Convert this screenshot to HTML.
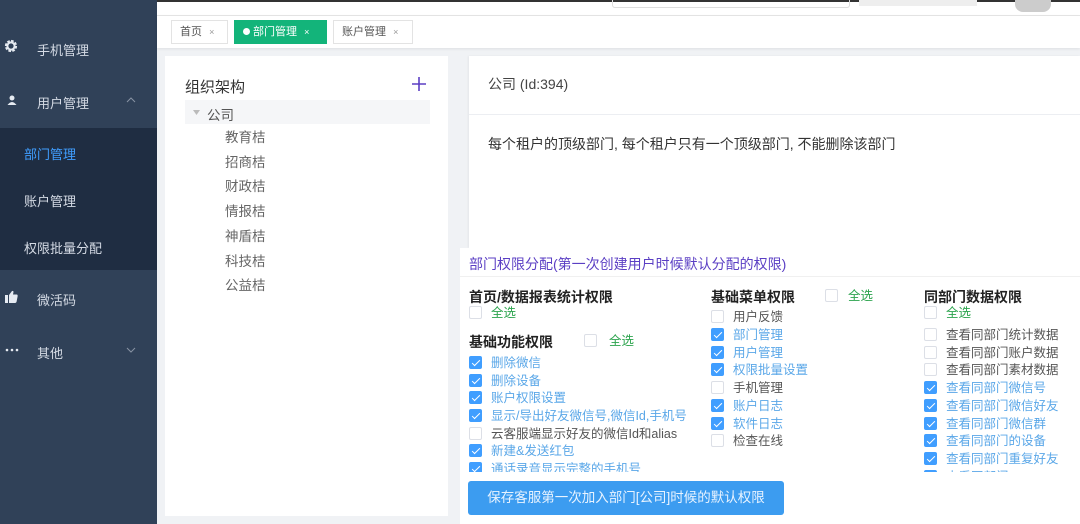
<!DOCTYPE html><html><head><meta charset="utf-8"><style>
*{margin:0;padding:0;box-sizing:border-box}
body{width:1080px;height:524px;overflow:hidden;position:relative;background:#f0f2f5;font-family:"Liberation Sans","Noto Sans CJK SC",sans-serif;font-size:13px;color:#333}
.abs{position:absolute}
#side{left:0;top:0;width:157px;height:524px;background:#304158}
.mi{position:absolute;left:0;width:157px;color:#d5dbe5;font-size:13px}
.sub{position:absolute;left:0;top:128px;width:157px;height:142px;background:#1f2d42}
.topbar{left:157px;top:0;width:923px;height:16px;background:#fff;border-top:2px solid #333;border-bottom:1px solid #e6e6e6}
.tabs{left:157px;top:16px;width:923px;height:32px;background:#fff;box-shadow:0 1px 3px rgba(0,0,0,.08)}
.tab{position:absolute;top:4px;height:24px;border:1px solid #e3e3e3;font-size:11px;line-height:22px;padding-left:8px;color:#555;background:#fff}
.card{background:#fff;position:absolute}
.cb{display:inline-block;width:13px;height:13px;border:1px solid #dcdfe6;border-radius:2px;vertical-align:-2px;margin-right:9px;background:#fff;position:relative}
.cb.on{background:#409eff;border-color:#409eff}
.cb.on:after{content:"";position:absolute;left:4px;top:1px;width:3px;height:7px;border:solid #fff;border-width:0 1.5px 1.5px 0;transform:rotate(45deg)}
.row{position:absolute;font-size:12.5px;color:#555;white-space:nowrap;line-height:16px}
.row.b{color:#5aa7e8}
.h{position:absolute;font-size:14px;font-weight:bold;color:#222;white-space:nowrap}
.g{color:#2da44e}
svg{position:absolute}
</style></head><body>
<div id="side" class="abs">
<div class="sub"></div>
<svg style="left:4px;top:39px" width="14" height="14" viewBox="0 0 14 14"><circle cx="7" cy="7" r="4.6" fill="none" stroke="#e6ebf2" stroke-width="3" stroke-dasharray="2.4 1.2"/><circle cx="7" cy="7" r="3.6" fill="none" stroke="#e6ebf2" stroke-width="2"/></svg>
<div class="mi" style="top:40px"><span style="position:absolute;left:37px">手机管理</span></div>
<svg style="left:7px;top:95px" width="10" height="10" viewBox="0 0 10 10"><circle cx="5" cy="3" r="2.5" fill="#e6ebf2"/><path d="M0.5 10 Q5 4 9.5 10Z" fill="#e6ebf2"/></svg>
<div class="mi" style="top:93px"><span style="position:absolute;left:37px">用户管理</span></div>
<svg style="left:126px;top:97px" width="10" height="6" viewBox="0 0 10 6"><path d="M1 5 L5 1 L9 5" fill="none" stroke="#8893a3" stroke-width="1"/></svg>
<div class="mi" style="top:144px;color:#409eff"><span style="position:absolute;left:24px">部门管理</span></div>
<div class="mi" style="top:191px"><span style="position:absolute;left:24px">账户管理</span></div>
<div class="mi" style="top:238px"><span style="position:absolute;left:24px">权限批量分配</span></div>
<svg style="left:5px;top:290px" width="13" height="13" viewBox="0 0 13 13"><rect x="0" y="5" width="3" height="8" fill="#e6ebf2"/><path d="M4 5 L7 1 Q8.5 0.5 8.5 2 L8 4.5 L12 4.5 Q13 5 12.5 7 L11.5 12 Q11 13 10 13 L4 13Z" fill="#e6ebf2"/></svg>
<div class="mi" style="top:290px"><span style="position:absolute;left:37px">微活码</span></div>
<svg style="left:5px;top:348px" width="14" height="4" viewBox="0 0 14 4"><circle cx="2" cy="2" r="1.3" fill="#e6ebf2"/><circle cx="7" cy="2" r="1.3" fill="#e6ebf2"/><circle cx="12" cy="2" r="1.3" fill="#e6ebf2"/></svg>
<div class="mi" style="top:343px"><span style="position:absolute;left:37px">其他</span></div>
<svg style="left:126px;top:347px" width="10" height="6" viewBox="0 0 10 6"><path d="M1 1 L5 5 L9 1" fill="none" stroke="#8893a3" stroke-width="1"/></svg>
</div>
<div class="topbar abs"><div class="abs" style="left:455px;top:-2px;width:238px;height:8px;border:1px solid #ddd;border-top:0;border-radius:0 0 3px 3px"></div><div class="abs" style="left:702px;top:-2px;width:118px;height:6px;background:#eee"></div><div class="abs" style="left:858px;top:-2px;width:36px;height:12px;background:#ccc;border-radius:0 0 8px 8px"></div></div>
<div class="tabs abs">
<div class="tab" style="left:14px;width:57px">首页 <span style="font-size:9px;color:#999;margin-left:4px">×</span></div>
<div class="tab" style="left:77px;width:93px;background:#13b47a;border-color:#13b47a;color:#fff"><span style="display:inline-block;width:7px;height:7px;border-radius:50%;background:#fff;margin-right:3px;vertical-align:0"></span>部门管理 <span style="font-size:9px;margin-left:4px">×</span></div>
<div class="tab" style="left:176px;width:80px">账户管理 <span style="font-size:9px;color:#999;margin-left:4px">×</span></div>
</div>
<div class="card" style="left:165px;top:56px;width:283px;height:460px">
<div class="abs" style="left:20px;top:20px;font-size:15px;color:#333">组织架构</div>
<svg style="left:246px;top:20px" width="16" height="16" viewBox="0 0 16 16"><path d="M8 1V15M1 8H15" stroke="#5b3fc4" stroke-width="1.6"/></svg>
<div class="abs" style="left:20px;top:44px;width:245px;height:24px;background:#f5f6f8"></div>
<svg style="left:28px;top:54px" width="7" height="5" viewBox="0 0 7 5"><path d="M0 0H7L3.5 5Z" fill="#bbb"/></svg>
<div class="abs" style="left:42px;top:48px;font-size:13.5px;color:#555">公司</div>
<div class="abs" style="left:60px;top:70px;font-size:13.5px;color:#666;line-height:24.7px">教育桔<br>招商桔<br>财政桔<br>情报桔<br>神盾桔<br>科技桔<br>公益桔</div>
</div>
<div class="card" style="left:469px;top:56px;width:611px;height:192px;box-shadow:-1px 0 2px rgba(0,0,0,.05)">
<div class="abs" style="left:19px;top:18px;font-size:14px;color:#444">公司 (Id:394)</div>
<div class="abs" style="left:0;top:58px;width:611px;height:1px;background:#eceef2"></div>
<div class="abs" style="left:19px;top:78px;font-size:14px;color:#333">每个租户的顶级部门, 每个租户只有一个顶级部门, 不能删除该部门</div>
</div>
<div class="abs" style="left:460px;top:248px;width:620px;height:276px;background:#fff"></div>
<div class="abs" style="left:469px;top:254px;font-size:14px;color:#5b3fc4">部门权限分配(第一次创建用户时候默认分配的权限)</div>
<div class="abs" style="left:460px;top:276px;width:620px;height:1px;background:#f0f0f0"></div>
<div style="position:absolute;left:0;top:0;width:1080px;height:472px;overflow:hidden">
<div class="h" style="left:469px;top:287px">首页/数据报表统计权限</div>
<div class="row" style="left:469px;top:305px"><span class="cb"></span><span class="g">全选</span></div>
<div class="h" style="left:469px;top:332px">基础功能权限</div>
<div class="row" style="left:584px;top:333px"><span class="cb"></span><span class="g" style="margin-left:3px">全选</span></div>
<div class="row b" style="left:469px;top:355px"><span class="cb on"></span>删除微信</div>
<div class="row b" style="left:469px;top:373px"><span class="cb on"></span>删除设备</div>
<div class="row b" style="left:469px;top:390px"><span class="cb on"></span>账户权限设置</div>
<div class="row b" style="left:469px;top:408px"><span class="cb on"></span>显示/导出好友微信号,微信Id,手机号</div>
<div class="row" style="left:469px;top:426px"><span class="cb"></span>云客服端显示好友的微信Id和alias</div>
<div class="row b" style="left:469px;top:443px"><span class="cb on"></span>新建&amp;发送红包</div>
<div class="row b" style="left:469px;top:461px"><span class="cb on"></span>通话录音显示完整的手机号</div>

<div class="h" style="left:711px;top:287px">基础菜单权限</div>
<div class="row" style="left:825px;top:288px"><span class="cb"></span><span class="g" style="margin-left:1px">全选</span></div>
<div class="row" style="left:711px;top:309px"><span class="cb"></span>用户反馈</div>
<div class="row b" style="left:711px;top:327px"><span class="cb on"></span>部门管理</div>
<div class="row b" style="left:711px;top:345px"><span class="cb on"></span>用户管理</div>
<div class="row b" style="left:711px;top:362px"><span class="cb on"></span>权限批量设置</div>
<div class="row" style="left:711px;top:380px"><span class="cb"></span>手机管理</div>
<div class="row b" style="left:711px;top:398px"><span class="cb on"></span>账户日志</div>
<div class="row b" style="left:711px;top:416px"><span class="cb on"></span>软件日志</div>
<div class="row" style="left:711px;top:433px"><span class="cb"></span>检查在线</div>

<div class="h" style="left:924px;top:287px">同部门数据权限</div>
<div class="row" style="left:924px;top:305px"><span class="cb"></span><span class="g">全选</span></div>
<div class="row" style="left:924px;top:327px"><span class="cb"></span>查看同部门统计数据</div>
<div class="row" style="left:924px;top:345px"><span class="cb"></span>查看同部门账户数据</div>
<div class="row" style="left:924px;top:362px"><span class="cb"></span>查看同部门素材数据</div>
<div class="row b" style="left:924px;top:380px"><span class="cb on"></span>查看同部门微信号</div>
<div class="row b" style="left:924px;top:398px"><span class="cb on"></span>查看同部门微信好友</div>
<div class="row b" style="left:924px;top:416px"><span class="cb on"></span>查看同部门微信群</div>
<div class="row b" style="left:924px;top:433px"><span class="cb on"></span>查看同部门的设备</div>
<div class="row b" style="left:924px;top:451px"><span class="cb on"></span>查看同部门重复好友</div>
<div class="row b" style="left:924px;top:469px"><span class="cb on"></span>查看同部门</div>
</div>
<div class="abs" style="left:468px;top:481px;width:316px;height:34px;background:#3c9cf0;border-radius:3px;color:#e8f3ff;font-size:13.5px;line-height:34px;text-align:center">保存客服第一次加入部门[公司]时候的默认权限</div>
</body></html>
